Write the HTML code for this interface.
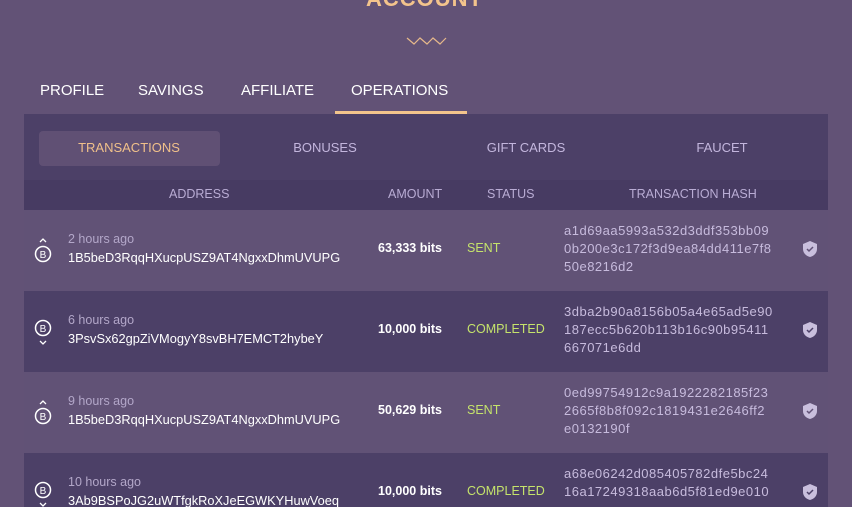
<!DOCTYPE html>
<html><head><style>
html,body{margin:0;width:852px;height:507px;overflow:hidden}
body{background:#625276;font-family:"Liberation Sans",sans-serif;position:relative}
.a{position:absolute}
.title{left:366px;top:-14px;color:#f3c48c;font-size:22px;font-weight:bold;letter-spacing:1px}
.tab{top:82px;color:#fff;font-size:15px}
.panel{left:24px;top:114px;width:804px;height:393px;background:#4c4067}
.sub{top:140px;font-size:13px;color:#c3b6dd;width:180px;text-align:center}
.hdr{left:24px;top:180px;width:804px;height:30px;background:#473b62}
.h{top:187px;font-size:12.5px;color:#b9acd4}
.row{left:24px;width:804px;height:81px}
.g{left:0;width:852px;height:81px;overflow:hidden}
.t{font-size:12.5px;color:#b3a7c9}
.ad{font-size:12.8px;color:#fff}
.am{font-size:12.5px;color:#fff;font-weight:bold}
.st{font-size:12.5px;color:#c5e36b}
.hs{font-size:13px;letter-spacing:0.5px;color:#c7bbdd;line-height:18px;width:260px}
</style></head><body>
<div class="a title">ACCOUNT</div>
<svg class="a" style="left:406px;top:36px" width="41" height="10"><polyline points="1,2 8,8 14,2 21,8 27,2 34,8 40,2" fill="none" stroke="#e6b88a" stroke-width="1.2"/></svg>
<div class="a tab" style="left:40px">PROFILE</div>
<div class="a tab" style="left:138px">SAVINGS</div>
<div class="a tab" style="left:241px">AFFILIATE</div>
<div class="a tab" style="left:351px">OPERATIONS</div>
<div class="a" style="left:335px;top:111px;width:132px;height:4px;background:#f3c48c"></div>
<div class="a panel"></div>
<div class="a" style="left:39px;top:131px;width:181px;height:35px;background:#605074;border-radius:4px"></div>
<div class="a sub" style="left:39px;color:#f0c08a">TRANSACTIONS</div>
<div class="a sub" style="left:235px">BONUSES</div>
<div class="a sub" style="left:436px">GIFT CARDS</div>
<div class="a sub" style="left:632px">FAUCET</div>
<div class="a hdr"></div>
<div class="a h" style="left:169px">ADDRESS</div>
<div class="a h" style="left:388px">AMOUNT</div>
<div class="a h" style="left:487px">STATUS</div>
<div class="a h" style="left:629px">TRANSACTION HASH</div>

<div class="a row" style="top:210px;background:#615276"></div>
<div class="a row" style="top:291px;background:#4c4067"></div>
<div class="a row" style="top:372px;background:#615276"></div>
<div class="a row" style="top:453px;height:54px;background:#4c4067"></div>

<div class="a g" style="top:210px">
<svg class="a" style="left:33px;top:24px" width="20" height="36"><path d="M7 8L10 5L13 8" stroke="#fff" stroke-width="1.3" fill="none"/><circle cx="10" cy="20" r="7.5" stroke="#fff" stroke-width="1.5" fill="none"/><text x="10" y="24" font-size="10" fill="#fff" text-anchor="middle" font-family="Liberation Sans">B</text></svg>
<div class="a t" style="left:68px;top:22px">2 hours ago</div>
<div class="a ad" style="left:68px;top:40px">1B5beD3RqqHXucpUSZ9AT4NgxxDhmUVUPG</div>
<div class="a am" style="left:378px;top:31px">63,333 bits</div>
<div class="a st" style="left:467px;top:31px">SENT</div>
<div class="a hs" style="left:564px;top:12px">a1d69aa5993a532d3ddf353bb09<br>0b200e3c172f3d9ea84dd411e7f8<br>50e8216d2</div>
<svg class="a" style="left:802px;top:30px" width="16" height="18"><path d="M8 1L15 4V9C15 13 12 16 8 17C4 16 1 13 1 9V4Z" fill="#c9bfdd"/><path d="M5 9L7 11L11 7" stroke="#615276" stroke-width="1.5" fill="none"/></svg>
</div>

<div class="a g" style="top:291px">
<svg class="a" style="left:33px;top:22px" width="20" height="36"><circle cx="10" cy="15" r="7.5" stroke="#fff" stroke-width="1.5" fill="none"/><text x="10" y="19" font-size="10" fill="#fff" text-anchor="middle" font-family="Liberation Sans">B</text><path d="M7 28L10 31L13 28" stroke="#fff" stroke-width="1.3" fill="none"/></svg>
<div class="a t" style="left:68px;top:22px">6 hours ago</div>
<div class="a ad" style="left:68px;top:40px">3PsvSx62gpZiVMogyY8svBH7EMCT2hybeY</div>
<div class="a am" style="left:378px;top:31px">10,000 bits</div>
<div class="a st" style="left:467px;top:31px">COMPLETED</div>
<div class="a hs" style="left:564px;top:12px">3dba2b90a8156b05a4e65ad5e90<br>187ecc5b620b113b16c90b95411<br>667071e6dd</div>
<svg class="a" style="left:802px;top:30px" width="16" height="18"><path d="M8 1L15 4V9C15 13 12 16 8 17C4 16 1 13 1 9V4Z" fill="#c9bfdd"/><path d="M5 9L7 11L11 7" stroke="#4c4067" stroke-width="1.5" fill="none"/></svg>
</div>

<div class="a g" style="top:372px">
<svg class="a" style="left:33px;top:24px" width="20" height="36"><path d="M7 8L10 5L13 8" stroke="#fff" stroke-width="1.3" fill="none"/><circle cx="10" cy="20" r="7.5" stroke="#fff" stroke-width="1.5" fill="none"/><text x="10" y="24" font-size="10" fill="#fff" text-anchor="middle" font-family="Liberation Sans">B</text></svg>
<div class="a t" style="left:68px;top:22px">9 hours ago</div>
<div class="a ad" style="left:68px;top:40px">1B5beD3RqqHXucpUSZ9AT4NgxxDhmUVUPG</div>
<div class="a am" style="left:378px;top:31px">50,629 bits</div>
<div class="a st" style="left:467px;top:31px">SENT</div>
<div class="a hs" style="left:564px;top:12px">0ed99754912c9a1922282185f23<br>2665f8b8f092c1819431e2646ff2<br>e0132190f</div>
<svg class="a" style="left:802px;top:30px" width="16" height="18"><path d="M8 1L15 4V9C15 13 12 16 8 17C4 16 1 13 1 9V4Z" fill="#c9bfdd"/><path d="M5 9L7 11L11 7" stroke="#615276" stroke-width="1.5" fill="none"/></svg>
</div>

<div class="a g" style="top:453px;height:54px">
<svg class="a" style="left:33px;top:22px" width="20" height="32"><circle cx="10" cy="15" r="7.5" stroke="#fff" stroke-width="1.5" fill="none"/><text x="10" y="19" font-size="10" fill="#fff" text-anchor="middle" font-family="Liberation Sans">B</text><path d="M7 28L10 31L13 28" stroke="#fff" stroke-width="1.3" fill="none"/></svg>
<div class="a t" style="left:68px;top:22px">10 hours ago</div>
<div class="a ad" style="left:68px;top:40px">3Ab9BSPoJG2uWTfgkRoXJeEGWKYHuwVoeq</div>
<div class="a am" style="left:378px;top:31px">10,000 bits</div>
<div class="a st" style="left:467px;top:31px">COMPLETED</div>
<div class="a hs" style="left:564px;top:12px">a68e06242d085405782dfe5bc24<br>16a17249318aab6d5f81ed9e010</div>
<svg class="a" style="left:802px;top:30px" width="16" height="18"><path d="M8 1L15 4V9C15 13 12 16 8 17C4 16 1 13 1 9V4Z" fill="#c9bfdd"/><path d="M5 9L7 11L11 7" stroke="#4c4067" stroke-width="1.5" fill="none"/></svg>
</div>
</body></html>
